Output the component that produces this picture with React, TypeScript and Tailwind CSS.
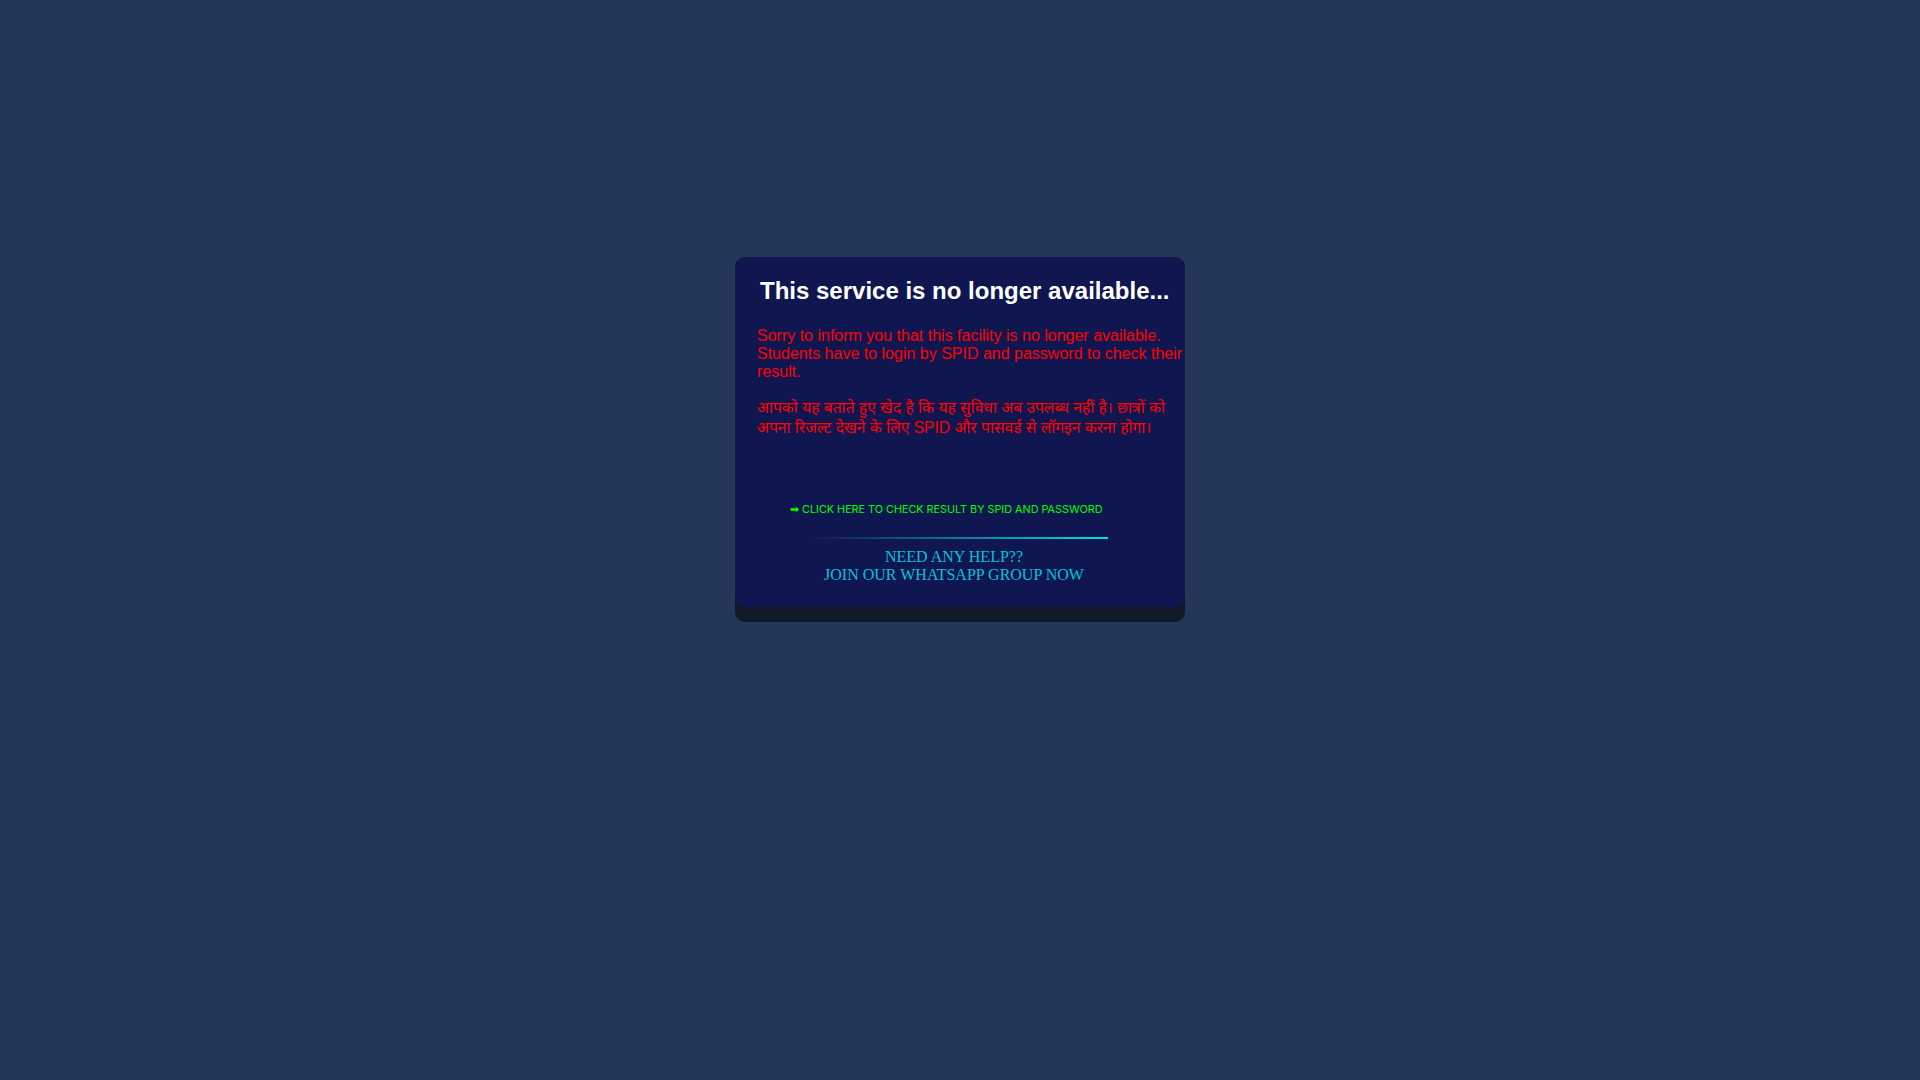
export default function App() {
  return (
    <div className="min-h-screen w-full bg-[#253759] flex justify-center pt-[257px]">
      <div className="w-[450px] h-[365px] rounded-[10px] bg-[#111827] pb-[15px]">
        <div className="h-[350px] rounded-[10px] bg-[#0f1650] pt-[20px]">
          <div className="h-[226px]">
            <h2 className="pl-[25px] text-[24px] font-bold text-white leading-[27.6px] whitespace-nowrap font-['Liberation_Sans',Arial,sans-serif]">
              This service is no longer available...
            </h2>
            <p className="mt-[22px] ml-[22px] w-[428px] text-[16px] leading-[normal] text-[#f00] font-['Liberation_Sans',Arial,sans-serif]">
              Sorry to inform you that this facility is no longer available. Students have to login by SPID and password to check their result.
            </p>
            <p className="mt-[18px] ml-[22px] w-[428px] text-[15.6px] leading-[normal] text-[#f00] font-['Liberation_Sans','Noto_Sans_Devanagari',Arial,sans-serif]">
              आपको यह बताते हुए खेद है कि यह सुविधा अब उपलब्ध नहीं है। छात्रों को अपना रिजल्ट देखने के लिए SPID और पासवर्ड से लॉगइन करना होगा।
            </p>
          </div>
          <a
            href="#"
            className="block pl-[55px] text-[10.8px] leading-[13px] text-[#00ff00] whitespace-nowrap font-['Inter',sans-serif]"
          >
            ➡ CLICK HERE TO CHECK RESULT BY SPID AND PASSWORD
          </a>
          <div className="mt-[21px] ml-[72px] w-[301px] h-[2px] bg-gradient-to-r from-transparent to-[#00e0ea]" />
          <div className="mt-[9px] pr-[12px] text-center text-[16px] leading-[normal] text-[#00c4dc] font-['Liberation_Serif','Times_New_Roman',serif]">
            <div>NEED ANY HELP??</div>
            <div>JOIN OUR WHATSAPP GROUP NOW</div>
          </div>
        </div>
      </div>
    </div>
  );
}
